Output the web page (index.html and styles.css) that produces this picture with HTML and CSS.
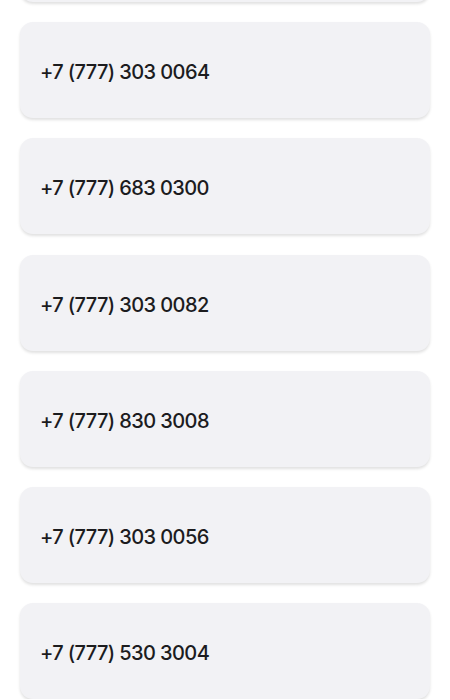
FILE: index.html
```html
<!DOCTYPE html>
<html lang="en">
<head>
    <meta charset="UTF-8">
    <meta name="viewport" content="width=device-width, initial-scale=1.0">
    <title>Phone numbers</title>
    <link rel="stylesheet" href="styles.css">
</head>
<body>

    <div class="numbers">
        <div class="number-card"></div>
        <div class="number-card">+7 (777) 303 0064</div>
        <div class="number-card">+7 (777) 683 0300</div>
        <div class="number-card">+7 (777) 303 0082</div>
        <div class="number-card">+7 (777) 830 3008</div>
        <div class="number-card">+7 (777) 303 0056</div>
        <div class="number-card">+7 (777) 530 3004</div>
    </div>

</body>
</html>
```

FILE: styles.css
```css
/* Scrolled list of numbers */
body {
    font-family: Inter, "Noto Sans", sans-serif;
    margin: 0;
    padding: 0;
    background-color: #fff;
    color: #1c1c1e;
    overflow: hidden;
}
.numbers {
    display: flex;
    flex-direction: column;
    gap: 20.2px;
    padding: 0 20px;
    margin-top: -94px;
}
.number-card {
    flex-shrink: 0;
    height: 96px;
    display: flex;
    align-items: center;
    padding: 4px 20px 0;
    box-sizing: border-box;
    background-color: #f2f2f5;
    border-radius: 13px;
    box-shadow: 0 2px 3px rgba(0, 0, 0, 0.12);
    font-size: 20px;
    font-weight: 500;
    letter-spacing: -0.6px;
}
```
